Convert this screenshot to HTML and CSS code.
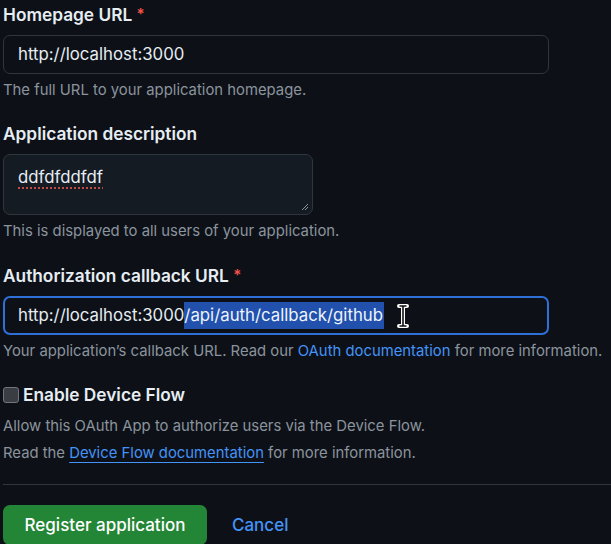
FILE: index.html
```html
<!DOCTYPE html>
<html lang="en">
<head>
    <meta charset="UTF-8">
    <title>Register a new OAuth app</title>
    <link rel="stylesheet" href="styles.css">
</head>
<body>
    <form class="app-form">
        <div class="form-group">
            <label class="form-label">Homepage URL <span class="required">*</span></label>
            <div class="text-field wide">http://localhost:3000</div>
            <p class="note">The full URL to your application homepage.</p>
        </div>

        <div class="form-group">
            <label class="form-label">Application description</label>
            <div class="text-area">
                <span class="misspelled">ddfdfddfdf</span>
                <svg class="grip" width="9" height="9" viewBox="0 0 9 9">
                    <path d="M8 2 L2 8 M8 5 L5 8" stroke="#8b949e" stroke-width="1"/>
                </svg>
            </div>
            <p class="note">This is displayed to all users of your application.</p>
        </div>

        <div class="form-group">
            <label class="form-label">Authorization callback URL <span class="required">*</span></label>
            <div class="text-field wide focused">http://localhost:3000<span class="selected">/api/auth/callback/github</span>
                <svg class="ibeam" width="12" height="24" viewBox="0 0 12 24">
                    <path d="M2 2 H10 M6 2 V22 M2 22 H10" stroke="#fff" stroke-width="4" stroke-linecap="round"/>
                    <path d="M2.5 2 H9.5 M6 2 V22 M2.5 22 H9.5" stroke="#111" stroke-width="1.6"/>
                </svg>
            </div>
            <p class="note">Your application’s callback URL. Read our <a href="#">OAuth documentation</a> for more information.</p>
        </div>

        <div class="form-group last">
            <label class="check-label"><span class="checkbox"></span>Enable Device Flow</label>
            <p class="note first">Allow this OAuth App to authorize users via the Device Flow.</p>
            <p class="note">Read the <a href="#" class="underlined">Device Flow documentation</a> for more information.</p>
        </div>

        <hr class="divider">

        <div class="form-actions">
            <button type="button" class="btn-primary">Register application</button>
            <a href="#" class="cancel">Cancel</a>
        </div>
    </form>
</body>
</html>
```

FILE: styles.css
```css
body {
    margin: 0;
    background-color: #0d1117;
    color: #e6edf3;
    font-family: Inter, "Noto Sans", sans-serif;
}

.app-form {
    padding: 3px 0 0 3px;
}

.form-group {
    margin-bottom: 23px;
}

.form-group.last {
    margin-bottom: 21px;
}

.form-label {
    display: block;
    font-size: 17.3px;
    font-weight: 600;
    line-height: 22px;
    margin-bottom: 9px;
}

.required {
    color: #f85149;
    font-size: 15px;
    vertical-align: 2px;
}

.text-field {
    box-sizing: border-box;
    position: relative;
    height: 39px;
    border: 1px solid #30363d;
    border-radius: 7px;
    padding: 0 14px;
    font-size: 16.8px;
    line-height: 37px;
    color: #e6edf3;
}

.text-field.wide {
    width: 546px;
}

.text-field.focused {
    border: 2px solid #2f6fd8;
    padding-left: 13px;
    line-height: 35px;
}

.selected {
    background-color: #2151ad;
    color: #eef3fb;
    padding: 3px 1px 4px 0;
}

.ibeam {
    position: absolute;
    left: 392px;
    top: 6px;
}

.text-area {
    box-sizing: border-box;
    position: relative;
    width: 310px;
    height: 61px;
    border: 1px solid #30363d;
    border-radius: 7px;
    background-color: #151b23;
    padding: 10px 14px;
    font-size: 16.8px;
    line-height: 24px;
}

.misspelled {
    text-decoration: underline dotted #e5534b;
    text-underline-offset: 5px;
}

.grip {
    position: absolute;
    right: 3px;
    bottom: 3px;
}

.note {
    margin: 6px 0 0;
    font-size: 14.85px;
    line-height: 20px;
    color: #8b949e;
}

.note.first {
    margin-top: 10px;
}

.note + .note {
    margin-top: 7px;
}

.note a {
    color: #4493f8;
    text-decoration: none;
}

.note a.underlined {
    text-decoration: underline;
    text-underline-offset: 4px;
}

.check-label {
    display: flex;
    align-items: center;
    gap: 4px;
    font-size: 17.3px;
    font-weight: 600;
    line-height: 22px;
}

.checkbox {
    box-sizing: border-box;
    width: 16px;
    height: 16px;
    border: 1px solid #6e7681;
    border-radius: 3px;
    background-color: #3a3d42;
}

.divider {
    border: none;
    border-top: 1px solid #30363d;
    margin: 0 0 20px;
}

.form-actions {
    display: flex;
    align-items: center;
    gap: 25px;
}

.btn-primary {
    height: 40px;
    width: 204px;
    border: none;
    border-radius: 7px;
    background-color: #238636;
    color: #fff;
    font-family: inherit;
    font-size: 17px;
    font-weight: 500;
}

.cancel {
    color: #4493f8;
    font-size: 17px;
    font-weight: 500;
    text-decoration: none;
}
```
